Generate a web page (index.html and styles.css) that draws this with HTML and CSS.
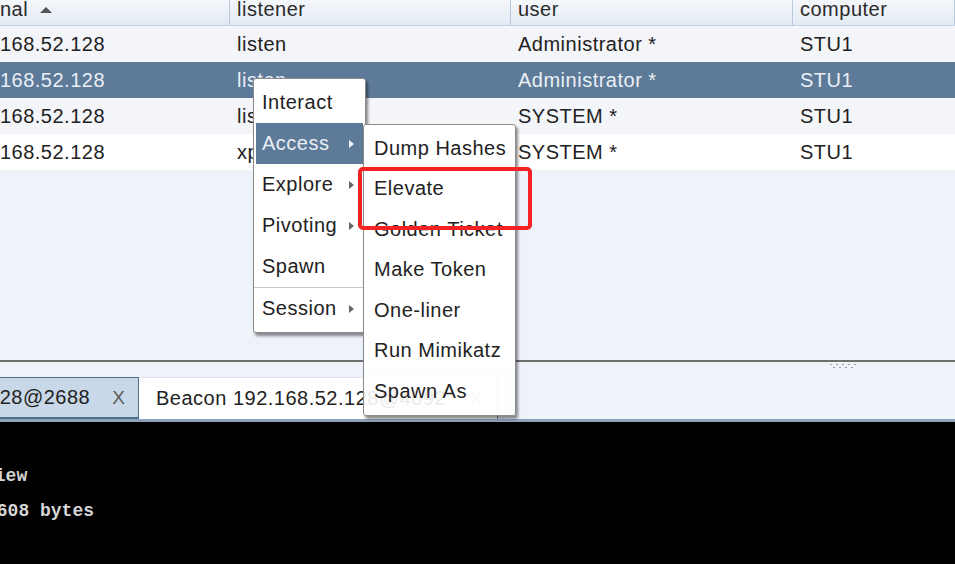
FILE: index.html
```html
<!DOCTYPE html>
<html>
<head>
<meta charset="utf-8">
<link rel="stylesheet" href="styles.css">
</head>
<body>
<div class="app">
  <div class="table">
    <div class="grid thead">
      <div class="cell"><span class="cut-h">external</span><span class="sort"></span></div>
      <div class="cell">listener</div>
      <div class="cell">user</div>
      <div class="cell">computer</div>
    </div>
    <div class="grid tr alt">
      <div class="cell"><span class="cut-d">192.168.52.128</span></div>
      <div class="cell">listen</div>
      <div class="cell">Administrator *</div>
      <div class="cell">STU1</div>
    </div>
    <div class="grid tr sel">
      <div class="cell"><span class="cut-d">192.168.52.128</span></div>
      <div class="cell">listen</div>
      <div class="cell">Administrator *</div>
      <div class="cell">STU1</div>
    </div>
    <div class="grid tr alt">
      <div class="cell"><span class="cut-d">192.168.52.128</span></div>
      <div class="cell">listen</div>
      <div class="cell">SYSTEM *</div>
      <div class="cell">STU1</div>
    </div>
    <div class="grid tr plain">
      <div class="cell"><span class="cut-d">192.168.52.128</span></div>
      <div class="cell">xp</div>
      <div class="cell">SYSTEM *</div>
      <div class="cell">STU1</div>
    </div>
    <div class="empty"></div>
  </div>

  <div class="splitter">
    <svg class="grip" width="28" height="6" viewBox="0 0 28 6">
      <g fill="#9aa3ad">
        <rect x="1" y="1" width="2" height="1"/><rect x="7" y="1" width="2" height="1"/><rect x="13" y="1" width="2" height="1"/><rect x="19" y="1" width="2" height="1"/><rect x="25" y="1" width="2" height="1"/>
        <rect x="4" y="4" width="2" height="1"/><rect x="10" y="4" width="2" height="1"/><rect x="16" y="4" width="2" height="1"/><rect x="22" y="4" width="2" height="1"/>
      </g>
    </svg>
  </div>

  <div class="tabbar">
    <div class="tab tab-other"><span class="tab-title">Beacon 192.168.52.128@2688</span><span class="tab-x">X</span></div>
    <div class="tab tab-active"><span class="tab-title">Beacon 192.168.52.128@4092</span><span class="tab-x light">X</span></div>
  </div>

  <div class="console">
    <div class="line cut-c">view</div>
    <div class="line cut-c2">2608 bytes</div>
  </div>

  <div class="menu main">
    <div class="mi">Interact</div>
    <div class="mi active">Access<span class="arr"></span></div>
    <div class="mi">Explore<span class="arr"></span></div>
    <div class="mi">Pivoting<span class="arr"></span></div>
    <div class="mi">Spawn</div>
    <div class="sep"></div>
    <div class="mi">Session<span class="arr"></span></div>
  </div>

  <div class="menu sub">
    <div class="mi">Dump Hashes</div>
    <div class="mi">Elevate</div>
    <div class="mi">Golden Ticket</div>
    <div class="mi">Make Token</div>
    <div class="mi">One-liner</div>
    <div class="mi">Run Mimikatz</div>
    <div class="mi">Spawn As</div>
  </div>

  <div class="annot"></div>
</div>
</body>
</html>
```

FILE: styles.css
```css
* { box-sizing: border-box; }
html, body { margin: 0; padding: 0; }
body {
  font-family: "Liberation Sans", Arial, sans-serif;
  font-size: 20px;
  letter-spacing: 0.5px;
  color: #222;
}
.app {
  position: relative;
  width: 955px;
  height: 564px;
  overflow: hidden;
  background: #eef2f9;
  display: flex;
  flex-direction: column;
}
.table { display: flex; flex-direction: column; height: 360px; }
.grid {
  display: grid;
  grid-template-columns: 230px 281px 282px 1fr;
}
.cell {
  padding-left: 7px;
  white-space: nowrap;
  overflow: hidden;
}
.thead {
  height: 26px;
  background: linear-gradient(#f4f7fb, #e3eaf3);
  border-bottom: 1px solid #c4d3e3;
}
.thead .cell {
  line-height: 19px;
  border-right: 1px solid #b8c9dc;
  color: #2a2a2a;
  display: flex;
  align-items: flex-start;
}
.cut-h { margin-left: -54px; }
.sort {
  width: 0; height: 0;
  margin-left: 12px;
  margin-top: 7px;
  border-left: 6px solid transparent;
  border-right: 6px solid transparent;
  border-bottom: 6px solid #555;
}
.tr { height: 36px; }
.tr .cell { line-height: 36px; }
.cut-d { margin-left: -48px; }
.alt { background: #f3f5f9; }
.plain { background: #ffffff; }
.sel { background: #5d7a98; color: #eaf0f6; }
.empty { flex: 1; background: #eef2f9; }

.splitter {
  height: 10px;
  border-top: 2px solid #6e6e6e;
  display: flex;
  align-items: flex-start;
  padding-left: 829px;
  padding-top: 1px;
}
.grip { display: block; }

.tabbar {
  height: 52px;
  padding-top: 7px;
  display: flex;
  align-items: stretch;
  border-bottom: 3px solid #8ea3ba;
  margin-left: -218px;
}
.tab {
  display: flex;
  align-items: center;
  padding-left: 17px;
  white-space: nowrap;
}
.tab-other {
  width: 357px;
  background: #c8d8e8;
  border: 1px solid #4e6e8e;
  border-bottom-width: 2px;
}
.tab-other .tab-x { margin-left: 22px; }
.tab-active {
  width: 359px;
  background: #ffffff;
  border-top: 1px solid #dfe6ee;
  border-right: 1px solid #6d8aa8;
}
.tab-x {
  margin-left: 19px;
  color: #5c5c5c;
  font-size: 19px;
}
.tab-x.light { color: #bcbcbc; margin-left: 24px; }

.console {
  flex: 1;
  background: #000;
  color: #d6d6d6;
  font-family: "Liberation Mono", "DejaVu Sans Mono", monospace;
  font-size: 18px;
  letter-spacing: 0;
  font-weight: bold;
  padding-top: 37px;
  white-space: nowrap;
}
.line { line-height: 35px; }
.cut-c { margin-left: -16px; }
.cut-c2 { margin-left: -14px; }

.menu {
  position: absolute;
  background: #fff;
  border: 1px solid #8a8a8a;
  border-radius: 3px;
  box-shadow: 2px 3px 3px rgba(0, 0, 0, 0.45);
  padding: 3px 2px;
}
.main { left: 253px; top: 78px; width: 113px; }
.main .mi { height: 41px; }
.sub {
  left: 363px; top: 124px; width: 153px;
  background: linear-gradient(#fff 0 247px, rgba(255, 255, 255, 0.9) 247px);
}
.sub .mi { height: 40.5px; padding-left: 8px; }
.mi {
  display: flex;
  align-items: center;
  justify-content: space-between;
  padding-left: 6px;
  padding-right: 9px;
  white-space: nowrap;
  color: #222;
}
.mi.active { background: #5d7a98; color: #e8eef4; }
.arr {
  width: 0; height: 0;
  border-top: 4px solid transparent;
  border-bottom: 4px solid transparent;
  border-left: 5px solid #666;
}
.mi.active .arr { border-left-color: #f0f4f8; }
.sep { height: 1px; background: #c9c9c9; margin: 0 -2px; }

.annot {
  position: absolute;
  left: 358px; top: 167px;
  width: 174px; height: 63px;
  border: 4px solid #f42222;
  border-radius: 5px;
}
```
